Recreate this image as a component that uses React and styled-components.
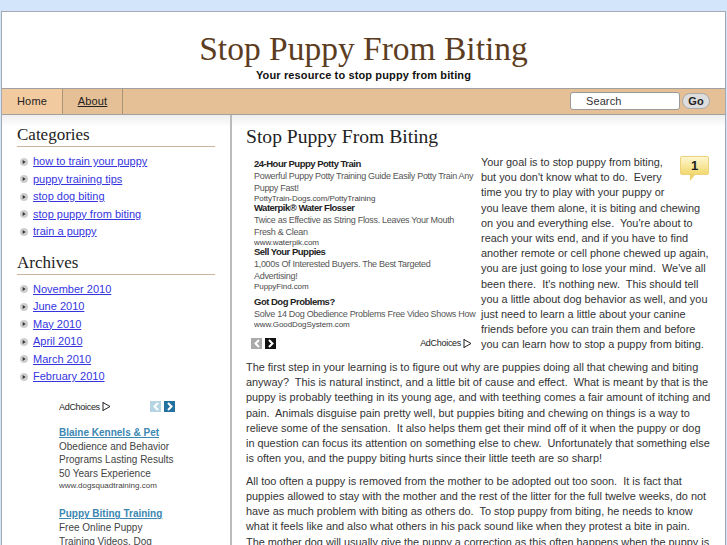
import React from 'react';
import styled, { createGlobalStyle } from 'styled-components';

const categories = ['how to train your puppy', 'puppy training tips', 'stop dog biting', 'stop puppy from biting', 'train a puppy'];
const archives = ['November 2010', 'June 2010', 'May 2010', 'April 2010', 'March 2010', 'February 2010'];

const inlineAds = [
  { title: '24-Hour Puppy Potty Train', text: 'Powerful Puppy Potty Training Guide Easily Potty Train Any Puppy Fast!', url: 'PottyTrain-Dogs.com/PottyTraining', gap: -1 },
  { title: 'Waterpik® Water Flosser', text: 'Twice as Effective as String Floss. Leaves Your Mouth Fresh & Clean', url: 'www.waterpik.com', gap: -1 },
  { title: 'Sell Your Puppies', text: '1,000s Of Interested Buyers. The Best Targeted\nAdvertising!', url: 'PuppyFind.com', gap: 5 },
  { title: 'Got Dog Problems?', text: 'Solve 14 Dog Obedience Problems Free Video Shows How', url: 'www.GoodDogSystem.com', gap: 0 },
];

const AdChoicesIcon = () => (
  <svg width="9" height="11" viewBox="0 0 9 11" fill="none" stroke="#222" strokeWidth="1">
    <path d="M1 1v9M1 1.5l7 4-7 4" />
  </svg>
);

const Chevron = ({ dir }) => (
  <svg width="6" height="9" viewBox="0 0 6 9" fill="none" stroke="#fff" strokeWidth="2">
    <path d={dir === 'left' ? 'M5 1L1.5 4.5 5 8' : 'M1 1l3.5 3.5L1 8'} />
  </svg>
);

const Bullet = () => (
  <svg width="8" height="8" viewBox="0 0 8 8">
    <circle cx="4" cy="4" r="4" fill="#cfcfcf" />
    <path d="M2.7 2l3 2-3 2z" fill="#333" />
  </svg>
);

const App = () => (
  <>
    <GlobalStyle />
    <Page>
      <Header>
        <SiteTitle>Stop Puppy From Biting</SiteTitle>
        <Tagline>Your resource to stop puppy from biting</Tagline>
      </Header>
      <Nav>
        <Tab $active>Home</Tab>
        <Tab as="a" href="#">About</Tab>
        <SearchForm>
          <SearchInput readOnly value="Search" />
          <GoButton type="button">Go</GoButton>
        </SearchForm>
      </Nav>
      <Columns>
        <Sidebar>
          <WidgetTitle>Categories</WidgetTitle>
          <LinkList>
            {categories.map((c) => (
              <li key={c}><Bullet /><a href="#">{c}</a></li>
            ))}
          </LinkList>
          <WidgetTitle>Archives</WidgetTitle>
          <LinkList>
            {archives.map((c) => (
              <li key={c}><Bullet /><a href="#">{c}</a></li>
            ))}
          </LinkList>
          <SideAd>
            <SideAdTop>
              <AdChoices>AdChoices <AdChoicesIcon /></AdChoices>
              <AdArrows>
                <ArrowBox $bg="#b5d5e3"><Chevron dir="left" /></ArrowBox>
                <ArrowBox $bg="#22719f"><Chevron dir="right" /></ArrowBox>
              </AdArrows>
            </SideAdTop>
            <SideAdItem>
              <a href="#">Blaine Kennels &amp; Pet</a>
              <p>Obedience and Behavior Programs Lasting Results 50 Years Experience</p>
              <small>www.dogsquadtraining.com</small>
            </SideAdItem>
            <SideAdItem>
              <a href="#">Puppy Biting Training</a>
              <p>Free Online Puppy Training Videos. Dog</p>
            </SideAdItem>
          </SideAd>
        </Sidebar>
        <Main>
          <PostTitle>Stop Puppy From Biting</PostTitle>
          <Post>
            <InlineAd>
              {inlineAds.map((ad) => (
                <InlineAdItem key={ad.title} $gap={ad.gap}>
                  <strong>{ad.title}</strong>
                  <p>{ad.text}</p>
                  <small>{ad.url}</small>
                </InlineAdItem>
              ))}
              <InlineAdFoot>
                <AdArrows>
                  <ArrowBox $bg="#aaa"><Chevron dir="left" /></ArrowBox>
                  <ArrowBox $bg="#111"><Chevron dir="right" /></ArrowBox>
                </AdArrows>
                <AdChoices>AdChoices <AdChoicesIcon /></AdChoices>
              </InlineAdFoot>
            </InlineAd>
            <CommentBadge>1</CommentBadge>
            <p>Your goal is to stop puppy from biting, but you don't know what to do.&nbsp; Every time you try to play with your puppy or you leave them alone, it is biting and chewing on you and everything else.&nbsp; You're about to reach your wits end, and if you have to find another remote or cell phone chewed up again, you are just going to lose your mind.&nbsp; We've all been there.&nbsp; It's nothing new.&nbsp; This should tell you a little about dog behavior as well, and you just need to learn a little about your canine friends before you can train them and before you can learn how to stop a puppy from biting.</p>
            <p>The first step in your learning is to figure out why are puppies doing all that chewing and biting anyway?&nbsp; This is natural instinct, and a little bit of cause and effect.&nbsp; What is meant by that is the puppy is probably teething in its young age, and with teething comes a fair amount of itching and pain.&nbsp; Animals disguise pain pretty well, but puppies biting and chewing on things is a way to relieve some of the sensation.&nbsp; It also helps them get their mind off of it when the puppy or dog in question can focus its attention on something else to chew.&nbsp; Unfortunately that something else is often you, and the puppy biting hurts since their little teeth are so sharp!</p>
            <p>All too often a puppy is removed from the mother to be adopted out too soon.&nbsp; It is fact that puppies allowed to stay with the mother and the rest of the litter for the full twelve weeks, do not have as much problem with biting as others do.&nbsp; To stop puppy from biting, he needs to know what it feels like and also what others in his pack sound like when they protest a bite in pain.&nbsp; The mother dog will usually give the puppy a correction as this often happens when the puppy is</p>
          </Post>
        </Main>
      </Columns>
    </Page>
  </>
);

const GlobalStyle = createGlobalStyle`
  html, body {
    margin: 0;
    height: 545px;
    overflow: hidden;
    background: #d3e5fb;
  }
  body {
    font-family: "Liberation Sans", Arial, sans-serif;
  }
`;

const Page = styled.div`
  margin: 11px 1px 0 1px;
  height: 534px;
  box-sizing: border-box;
  border: 1px solid #a3aab0;
  border-bottom: 0;
  background: #fff;
  overflow: hidden;
  display: flex;
  flex-direction: column;
`;

const Header = styled.header`
  height: 76px;
  text-align: center;
  box-sizing: border-box;
  padding-top: 20px;
`;

const SiteTitle = styled.h1`
  margin: 0;
  font: 400 33.5px/34px "Liberation Serif", serif;
  color: #5c3d22;
`;

const Tagline = styled.div`
  margin-top: 2px;
  font-size: 11px;
  font-weight: 700;
  line-height: 14px;
  letter-spacing: 0.13px;
  color: #111;
`;

const Nav = styled.nav`
  height: 25px;
  flex: none;
  display: flex;
  align-items: stretch;
  background: #e5bf95;
  border-top: 1px solid #a0a0a0;
  border-bottom: 1px solid #a0a0a0;
`;

const Tab = styled.div`
  width: ${(p) => (p.$active ? '61px' : '60px')};
  box-sizing: border-box;
  border-right: 1px solid #a89477;
  text-align: center;
  font-size: 11px;
  line-height: 24px;
  letter-spacing: 0.2px;
  color: #222;
  background: ${(p) => (p.$active ? '#f2ca9f' : '#e5bf95')};
`;

const SearchForm = styled.form`
  margin-left: auto;
  margin-right: 15px;
  padding-bottom: 2px;
  display: flex;
  align-items: center;
  gap: 2px;
`;

const SearchInput = styled.input`
  width: 110px;
  height: 18px;
  box-sizing: border-box;
  border: 1px solid #9a9a9a;
  border-radius: 3px;
  padding: 0 0 0 15px;
  font: 11px "Liberation Sans", sans-serif;
  letter-spacing: 0.1px;
  color: #333;
  background: #fff;
`;

const GoButton = styled.button`
  width: 28px;
  height: 16px;
  padding: 0;
  border: 1px solid #aaa;
  border-radius: 8px;
  background: #ddd;
  font: 700 11px "Liberation Sans", sans-serif;
  color: #222;
`;

const Columns = styled.div`
  flex: 1;
  display: flex;
  min-height: 0;
  background: linear-gradient(#eee, #fff 12px);
`;

const Sidebar = styled.aside`
  width: 230px;
  flex: none;
  box-sizing: border-box;
  padding: 11px 15px 0 15px;
  border-right: 2px solid #bbb;
`;

const WidgetTitle = styled.h3`
  margin: 0 0 6px;
  padding-bottom: 2px;
  border-bottom: 1px solid #cdb69d;
  font: 400 17px/18px "Liberation Serif", serif;
  color: #222;
`;

const LinkList = styled.ul`
  list-style: none;
  margin: 0 0 13px;
  padding: 0;

  li {
    display: flex;
    align-items: center;
    gap: 5px;
    padding-left: 3px;
    font-size: 11px;
    line-height: 17.5px;
  }

  a {
    color: #3535e0;
  }
`;

const SideAd = styled.div`
  margin: 14px 0 0 42px;
  width: 120px;
`;

const SideAdTop = styled.div`
  display: flex;
  justify-content: space-between;
  align-items: center;
  height: 14px;
  margin-bottom: 8px;
  width: 116px;
`;

const AdChoices = styled.span`
  font-size: 9px;
  letter-spacing: -0.3px;
  color: #222;
  display: inline-flex;
  gap: 2px;
  align-items: center;
`;

const AdArrows = styled.div`
  display: flex;
  gap: 3px;
`;

const ArrowBox = styled.span`
  width: 11px;
  height: 11px;
  display: flex;
  align-items: center;
  justify-content: center;
  background: ${(p) => p.$bg};
`;

const SideAdItem = styled.div`
  margin-bottom: 12px;

  a {
    font-size: 10px;
    font-weight: 700;
    line-height: 14px;
    color: #3b87b2;
  }
  p {
    margin: 0;
    font-size: 10px;
    line-height: 13.6px;
    color: #444;
  }
  small {
    display: block;
    font-size: 8px;
    line-height: 11px;
    color: #444;
  }
`;

const Main = styled.main`
  flex: 1;
  min-width: 0;
  padding: 10px 14px 0 14px;
`;

const PostTitle = styled.h2`
  margin: 0 0 6px;
  font: 400 19.6px/24px "Liberation Serif", serif;
  color: #222;
`;

const Post = styled.div`
  font-size: 10.9px;
  line-height: 15.2px;
  color: #333;

  p {
    margin: 0 0 7.4px;
  }
`;

const InlineAd = styled.div`
  float: left;
  width: 223px;
  margin: 3px 4px 0 0;
  padding-left: 8px;
  font-size: 9px;
`;

const InlineAdItem = styled.div`
  margin-bottom: ${(p) => p.$gap}px;

  strong {
    display: block;
    font-size: 9.5px;
    letter-spacing: -0.5px;
    line-height: 12px;
    color: #222;
  }
  p {
    margin: 0;
    line-height: 12px;
    letter-spacing: -0.3px;
    white-space: pre-line;
    color: #555;
  }
  small {
    display: block;
    font-size: 8px;
    line-height: 9px;
    letter-spacing: -0.08px;
    color: #444;
  }
`;

const InlineAdFoot = styled.div`
  display: flex;
  justify-content: space-between;
  align-items: center;
  margin: 7px 5px 0 -3px;
`;

const CommentBadge = styled.div`
  float: right;
  position: relative;
  width: 27px;
  height: 17px;
  margin: 1px 2px 15px 10px;
  border: 1px solid #ecd27a;
  border-radius: 2px;
  background: linear-gradient(#fdf6cf, #f3d96f);
  font-size: 13px;
  font-weight: 700;
  line-height: 17px;
  text-align: center;
  color: #222;

  &::after {
    content: '';
    position: absolute;
    left: 9px;
    bottom: -7px;
    border-left: 5px solid #f0d36a;
    border-bottom: 6px solid transparent;
  }
`;

export default App;
